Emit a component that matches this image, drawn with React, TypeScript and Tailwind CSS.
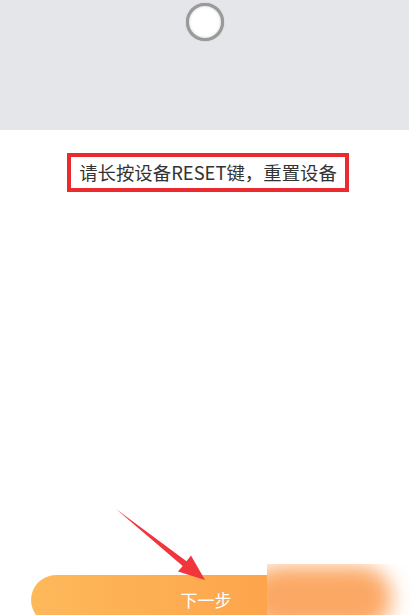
import React from 'react';

export default function App() {
  return (
    <div
      className="relative flex h-[615px] w-[412px] flex-col overflow-hidden bg-white"
      style={{ fontFamily: '"Noto Sans CJK SC", "Noto Sans", sans-serif' }}
    >
      {/* top preview area */}
      <div className="mr-[3px] flex h-[130px] justify-center bg-[#e5e6ea] pt-[3px]">
        <div className="h-[38px] w-[38px] rounded-full border-[3px] border-[#9a9a9a] bg-white shadow-[0_0_1px_rgba(0,0,0,0.4),inset_0_0_3px_rgba(0,0,0,0.2)]" />
      </div>

      {/* hint */}
      <div className="mt-[23px] flex justify-center pl-[4px]">
        <div className="flex h-[39px] w-[282px] items-center justify-center whitespace-nowrap border-[4px] border-[#ea2a2e] text-[18.4px] leading-none text-[#333]">
          请长按设备RESET键，重置设备
        </div>
      </div>

      {/* button */}
      <div className="mt-auto pl-[31px]">
        <button className="flex h-[50px] w-[350px] translate-y-[10px] items-start justify-center rounded-full bg-gradient-to-r from-[#fdb95b] to-[#fd9a45] pt-[16px] text-[17px] leading-none text-white">
          下一步
        </button>
      </div>

      {/* blurred patch */}
      <div className="absolute left-[267px] top-[564px] h-[60px] w-[145px] overflow-hidden bg-white">
        <div className="absolute left-[-20px] top-[2px] h-[64px] w-[145px] rounded-full bg-[#fb9f55] opacity-90 blur-[10px]" />
      </div>

      {/* annotation arrow */}
      <svg className="absolute left-0 top-0" width="412" height="615" viewBox="0 0 412 615">
        <polygon
          points="116,509 186.5,561.3 191,555.5 205,580 178,571.5 182.7,566"
          fill="#f2343c"
        />
      </svg>
    </div>
  );
}
